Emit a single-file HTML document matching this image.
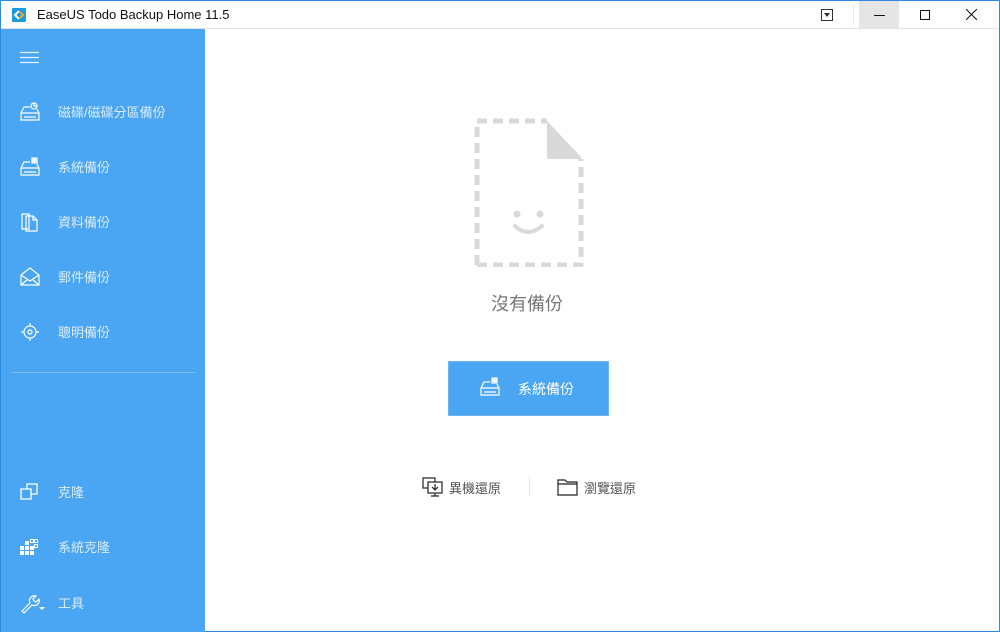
<!DOCTYPE html>
<html><head><meta charset="utf-8">
<style>
*{margin:0;padding:0;box-sizing:border-box;white-space:nowrap}
html,body{width:1000px;height:632px;overflow:hidden;background:#fff;font-family:"Liberation Sans","Noto Sans CJK TC",sans-serif}
.win{position:absolute;left:0;top:0;width:1000px;height:632px;border:1px solid #2b8be0;border-top:1px solid #2b8be0}
.title{position:absolute;left:0;top:0;width:998px;height:28px;background:#fff;border-bottom:1px solid #e3e3e3}
.title .t{position:absolute;left:36px;top:6px;font-size:13px;color:#111}
.side{position:absolute;left:0;top:28px;width:204px;height:603px;background:#4aa6f3}
.item{position:absolute;left:0;width:204px;height:30px}
.item svg{position:absolute;left:18px;top:3px}
.item span{position:absolute;left:57px;top:4px;font-size:13px;color:#d9ecfd}
.sep{position:absolute;left:10px;top:343px;width:185px;height:1px;background:#7cbdf6}
.main{position:absolute;left:204px;top:28px;width:795px;height:603px}
</style></head><body>
<div class="win">
<div class="title">
<svg style="position:absolute;left:11px;top:7px" width="14" height="14" viewBox="0 0 14 14"><rect width="14" height="14" rx="1" fill="#1a9ae0"/><path d="M7 3L3 7l4 4" stroke="#fff" stroke-width="2" fill="none"/><path d="M8 4l3 3-3 3" stroke="#f5a623" stroke-width="2" fill="none"/></svg>
<div class="t">EaseUS Todo Backup Home 11.5</div>
<svg style="position:absolute;left:820px;top:8px" width="12" height="12" viewBox="0 0 12 12"><rect x="0.5" y="0.5" width="11" height="11" fill="none" stroke="#333"/><path d="M3 4h6L6 8z" fill="#333"/></svg>
<div style="position:absolute;left:852px;top:4px;width:1px;height:20px;background:#e8e8e8"></div>
<div style="position:absolute;left:858px;top:0;width:40px;height:27px;background:#e5e5e5"></div>
<div style="position:absolute;left:873px;top:14px;width:11px;height:1px;background:#111"></div>
<div style="position:absolute;left:919px;top:9px;width:10px;height:10px;border:1px solid #111"></div>
<svg style="position:absolute;left:965px;top:8px" width="11" height="11" viewBox="0 0 11 11"><path d="M0 0L11 11M11 0L0 11" stroke="#111" stroke-width="1"/></svg>
</div>
<div class="side">
<svg style="position:absolute;left:19px;top:22px" width="19" height="13"><path d="M0 1.5h19M0 6.5h19M0 11.5h19" stroke="#e6f2fe" stroke-width="1.3"/></svg>
<div class="item" style="top:69px"><svg width="22" height="22" viewBox="0 0 22 22" fill="none" stroke="#fff" stroke-width="1.2"><path d="M2 12l3-6h6M2 12v7h18v-7l-2-4"/><path d="M2 12h18M5 16h12"/><circle cx="15" cy="5" r="3"/><path d="M15 2v3h3"/></svg><span>磁碟/磁碟分區備份</span></div>
<div class="item" style="top:124px"><svg width="22" height="22" viewBox="0 0 22 22" fill="none" stroke="#fff" stroke-width="1.2"><path d="M2 12l3-6h6M2 12v7h18v-7l-2-4"/><path d="M2 12h18M5 16h12"/><rect x="13" y="2" width="2" height="2"/><rect x="16" y="2" width="2" height="2"/><rect x="13" y="5" width="2" height="2"/><rect x="16" y="5" width="2" height="2"/></svg><span>系統備份</span></div>
<div class="item" style="top:179px"><svg width="22" height="22" viewBox="0 0 22 22" fill="none" stroke="#fff" stroke-width="1.2"><path d="M3 3h7v15H3z"/><path d="M7 5h7l4 4v11H7z"/><path d="M14 5v4h4"/></svg><span>資料備份</span></div>
<div class="item" style="top:234px"><svg width="22" height="22" viewBox="0 0 22 22" fill="none" stroke="#fff" stroke-width="1.2"><path d="M2 9l9-7 9 7v10H2z"/><path d="M2 9l9 6 9-6M2 19l7-6M20 19l-7-6"/></svg><span>郵件備份</span></div>
<div class="item" style="top:289px"><svg width="22" height="22" viewBox="0 0 22 22" fill="none" stroke="#fff" stroke-width="1.2"><circle cx="11" cy="11" r="6"/><circle cx="11" cy="11" r="2"/><path d="M11 2v3M11 17v3M2 11h3M17 11h3"/></svg><span>聰明備份</span></div>
<div class="sep"></div>
<div class="item" style="top:449px"><svg width="22" height="22" viewBox="0 0 22 22" fill="none" stroke="#fff" stroke-width="1.3"><rect x="2" y="8" width="10" height="10"/><path d="M8 8V3h10v10h-6"/></svg><span>克隆</span></div>
<div class="item" style="top:504px"><svg width="22" height="22" viewBox="0 0 22 22" fill="#fff"><rect x="1" y="10" width="4" height="4"/><rect x="6" y="10" width="4" height="4"/><rect x="1" y="15" width="4" height="4"/><rect x="6" y="15" width="4" height="4"/><rect x="11" y="15" width="4" height="4"/><rect x="6" y="5" width="4" height="4"/><rect x="11" y="10" width="4" height="4"/><rect x="11.5" y="3.5" width="3" height="3" fill="none" stroke="#fff"/><rect x="15.5" y="3.5" width="3" height="3" fill="none" stroke="#fff"/><rect x="15.5" y="8.5" width="3" height="3" fill="none" stroke="#fff"/></svg><span>系統克隆</span></div>
<div class="item" style="top:560px"><svg width="28" height="22" viewBox="0 0 28 22" fill="none" stroke="#fff" stroke-width="1.2"><path d="M3 19l8-8a5 5 0 0 1 6-7l-3 3 1 2 2 1 3-3a5 5 0 0 1-7 6l-8 8z"/><path d="M20 15h6l-3 3z" fill="#fff" stroke="none"/></svg><span>工具</span></div>
</div>
<div class="main">
<svg style="position:absolute;left:268px;top:88px" width="112" height="150" viewBox="0 0 112 150" fill="none" stroke="#d9d9d9" stroke-width="5" stroke-dasharray="10 6">
<path d="M4 148V4h70"/><path d="M4 148h104V42"/>
<path d="M74 4L108 40V42H74z" fill="#d9d9d9" stroke="none"/>
<circle cx="44" cy="97" r="3.5" fill="#d9d9d9" stroke="none"/><circle cx="67" cy="97" r="3.5" fill="#d9d9d9" stroke="none"/>
<path d="M42 109q13 12 27 0" stroke-dasharray="none" stroke-width="4" stroke-linecap="round"/>
</svg>
<div style="position:absolute;left:286px;top:261px;font-size:18px;color:#777">沒有備份</div>
<div style="position:absolute;left:243px;top:332px;width:161px;height:55px;background:#4aa6f3;border:1px solid #6ab6f5"></div>
<svg style="position:absolute;left:274px;top:347px" width="22" height="22" viewBox="0 0 22 22" fill="none" stroke="#fff" stroke-width="1.2"><path d="M2 12l3-6h6M2 12v7h18v-7l-2-4"/><path d="M2 12h18M5 16h12"/><rect x="13" y="2" width="2" height="2"/><rect x="16" y="2" width="2" height="2"/><rect x="13" y="5" width="2" height="2"/><rect x="16" y="5" width="2" height="2"/></svg>
<div style="position:absolute;left:313px;top:350px;font-size:14px;color:#fff">系統備份</div>
<svg style="position:absolute;left:217px;top:447px" width="22" height="22" viewBox="0 0 22 22" fill="none" stroke="#222" stroke-width="1.2"><rect x="1" y="2" width="12" height="10"/><rect x="6" y="6" width="14" height="11" fill="#fff"/><path d="M13 17v3M9 20h8M13 8v6M10 11l3 3 3-3"/></svg>
<div style="position:absolute;left:244px;top:449px;font-size:13px;color:#555">異機還原</div>
<div style="position:absolute;left:324px;top:448px;width:1px;height:20px;background:#e5e5e5"></div>
<svg style="position:absolute;left:352px;top:448px" width="22" height="20" viewBox="0 0 22 20" fill="none" stroke="#222" stroke-width="1.2"><path d="M1 3h7l2 2h10v13H1z"/><path d="M1 7h19"/></svg>
<div style="position:absolute;left:379px;top:449px;font-size:13px;color:#555">瀏覽還原</div>
</div>
</div>
</body></html>
